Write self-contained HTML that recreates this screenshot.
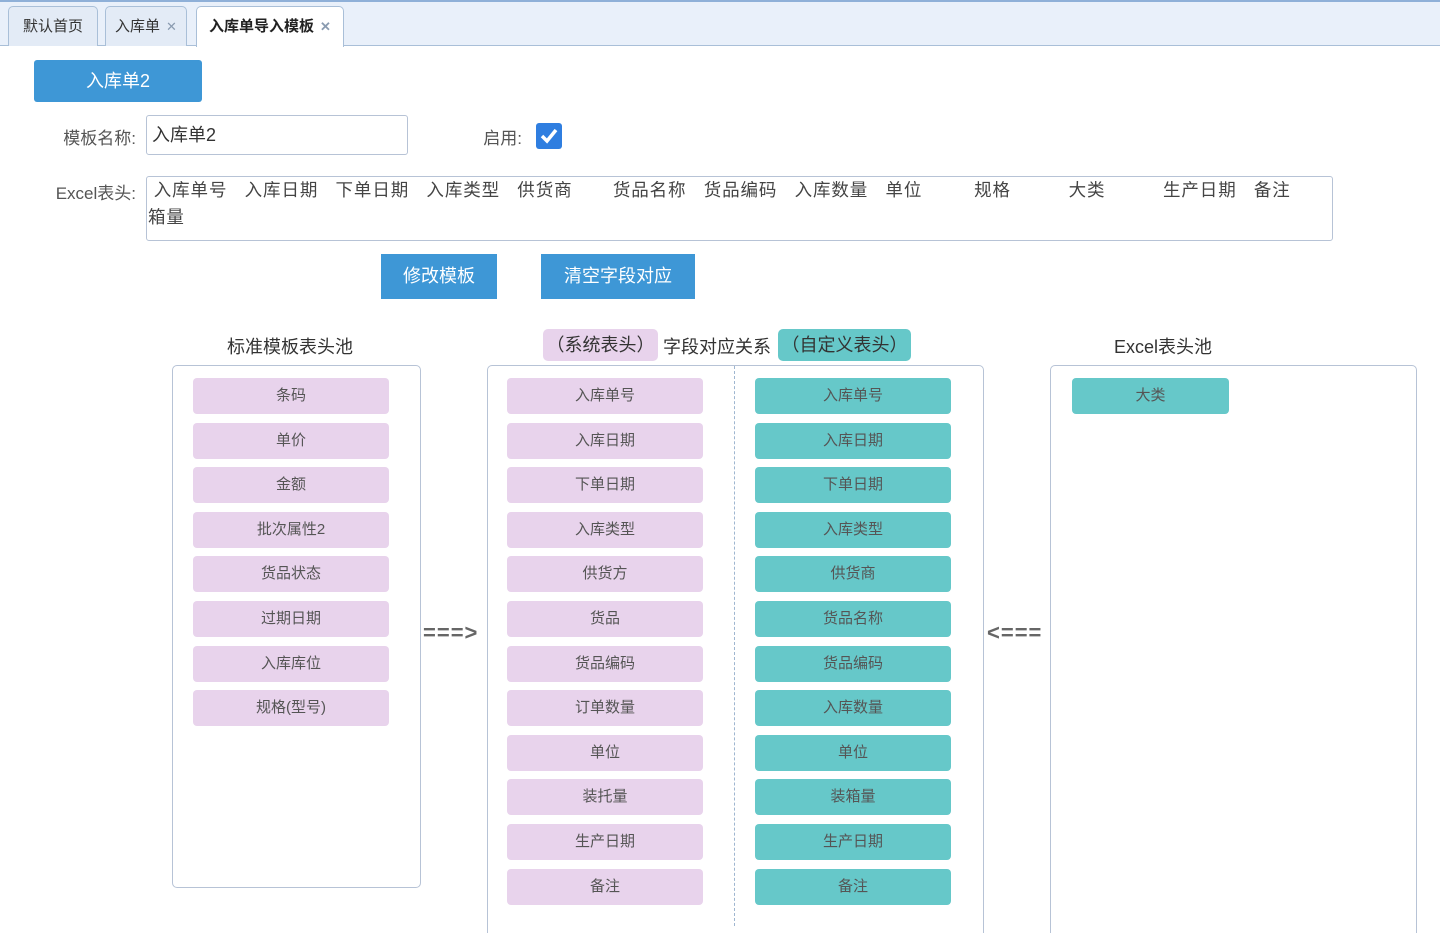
<!DOCTYPE html><html><head><meta charset="utf-8"><style>
html,body{margin:0;width:1440px;height:933px;overflow:hidden}
body{background:#fff;font-family:"Liberation Sans","Noto Sans CJK SC",sans-serif;position:relative;color:#333}
.a{position:absolute}
.tabs{left:0;top:0;width:1440px;height:46px;background:#e9f0fa;border-bottom:1px solid #a9bfd8;border-top:2px solid #8fb0d8;box-sizing:border-box}
.tab{position:absolute;top:6px;height:40px;border:1px solid #a9bfd8;border-bottom:none;border-radius:5px 5px 0 0;background:#e3ebf6;font-size:15px;line-height:40px;text-align:center;box-sizing:border-box}
.tab i{font-style:normal;color:#8a9bb0;font-size:13px;margin-left:6px}
.btn{background:#3e97d6;color:#fff;font-size:18px;text-align:center}
.lbl{font-size:17px;color:#555;text-align:right}
.box{border:1.5px solid #b7c3d6;border-radius:5px;box-sizing:border-box}
.it{position:absolute;width:196px;height:36px;border-radius:4px;font-size:15px;line-height:36px;text-align:center;color:#555}
.p{background:#e8d3ec}.t{background:#66c8c9}
</style></head><body>
<div class="a tabs"></div>
<div class="tab" style="left:8px;width:90px">默认首页</div>
<div class="tab" style="left:105px;width:82px">入库单<i>✕</i></div>
<div class="tab" style="left:196px;width:148px;background:#fff;height:41px;font-weight:bold;color:#222">入库单导入模板<i>✕</i></div>
<div class="a btn" style="left:34px;top:60px;width:168px;height:42px;line-height:42px;border-radius:3px">入库单2</div>
<div class="a lbl" style="left:30px;top:124px;width:106px">模板名称:</div>
<div class="a box" style="left:146px;top:115px;width:262px;height:40px;font-size:18px;line-height:38px;padding-left:5px;border-radius:3px">入库单2</div>
<div class="a lbl" style="left:440px;top:124px;width:82px">启用:</div>
<div class="a" style="left:536px;top:123px;width:26px;height:26px;background:#2f7ee0;border-radius:3px"><svg width="26" height="26"><path d="M6 13l5 5 9-11" stroke="#fff" stroke-width="3.5" fill="none"/></svg></div>
<div class="a lbl" style="left:30px;top:179px;width:106px">Excel表头:</div>
<div class="a box" style="left:146px;top:176px;width:1187px;height:65px;font-size:17.5px;letter-spacing:0.9px;line-height:27px;padding-left:1px;border-radius:3px;white-space:pre;color:#444;overflow:hidden"> 入库单号   入库日期   下单日期   入库类型   供货商       货品名称   货品编码   入库数量   单位         规格          大类          生产日期   备注           装
箱量</div>
<div class="a btn" style="left:381px;top:254px;width:116px;height:45px;line-height:45px">修改模板</div>
<div class="a btn" style="left:541px;top:254px;width:154px;height:45px;line-height:45px">清空字段对应</div>
<div class="a" style="left:172px;top:333px;width:236px;text-align:center;font-size:18px">标准模板表头池</div>
<div class="a" style="left:543px;top:329px;width:115px;height:32px;line-height:32px;background:#e8d3ec;border-radius:5px;text-align:center;font-size:18px">（系统表头）</div>
<div class="a" style="left:663px;top:333px;font-size:18px">字段对应关系</div>
<div class="a" style="left:778px;top:329px;width:133px;height:32px;line-height:32px;background:#66c8c9;border-radius:5px;text-align:center;font-size:18px">（自定义表头）</div>
<div class="a" style="left:1050px;top:333px;width:226px;text-align:center;font-size:18px">Excel表头池</div>
<div class="a box" style="left:172px;top:365px;width:249px;height:523px"></div>
<div class="a box" style="left:487px;top:365px;width:497px;height:580px"></div>
<div class="a" style="left:734px;top:366px;height:560px;border-left:1px dashed #9fb6d0"></div>
<div class="a box" style="left:1050px;top:365px;width:367px;height:580px"></div>
<div class="a" style="left:423px;top:620px;font-size:22px;letter-spacing:1px;font-weight:bold;color:#666">===&gt;</div>
<div class="a" style="left:987px;top:620px;font-size:22px;letter-spacing:1px;font-weight:bold;color:#666">&lt;===</div>
<div class="it p" style="left:193px;top:378px">条码</div>
<div class="it p" style="left:193px;top:423px">单价</div>
<div class="it p" style="left:193px;top:467px">金额</div>
<div class="it p" style="left:193px;top:512px">批次属性2</div>
<div class="it p" style="left:193px;top:556px">货品状态</div>
<div class="it p" style="left:193px;top:601px">过期日期</div>
<div class="it p" style="left:193px;top:646px">入库库位</div>
<div class="it p" style="left:193px;top:690px">规格(型号)</div>
<div class="it p" style="left:507px;top:378px">入库单号</div>
<div class="it p" style="left:507px;top:423px">入库日期</div>
<div class="it p" style="left:507px;top:467px">下单日期</div>
<div class="it p" style="left:507px;top:512px">入库类型</div>
<div class="it p" style="left:507px;top:556px">供货方</div>
<div class="it p" style="left:507px;top:601px">货品</div>
<div class="it p" style="left:507px;top:646px">货品编码</div>
<div class="it p" style="left:507px;top:690px">订单数量</div>
<div class="it p" style="left:507px;top:735px">单位</div>
<div class="it p" style="left:507px;top:779px">装托量</div>
<div class="it p" style="left:507px;top:824px">生产日期</div>
<div class="it p" style="left:507px;top:869px">备注</div>
<div class="it t" style="left:755px;top:378px">入库单号</div>
<div class="it t" style="left:755px;top:423px">入库日期</div>
<div class="it t" style="left:755px;top:467px">下单日期</div>
<div class="it t" style="left:755px;top:512px">入库类型</div>
<div class="it t" style="left:755px;top:556px">供货商</div>
<div class="it t" style="left:755px;top:601px">货品名称</div>
<div class="it t" style="left:755px;top:646px">货品编码</div>
<div class="it t" style="left:755px;top:690px">入库数量</div>
<div class="it t" style="left:755px;top:735px">单位</div>
<div class="it t" style="left:755px;top:779px">装箱量</div>
<div class="it t" style="left:755px;top:824px">生产日期</div>
<div class="it t" style="left:755px;top:869px">备注</div>
<div class="it t" style="left:1072px;top:378px;width:157px">大类</div>
</body></html>
